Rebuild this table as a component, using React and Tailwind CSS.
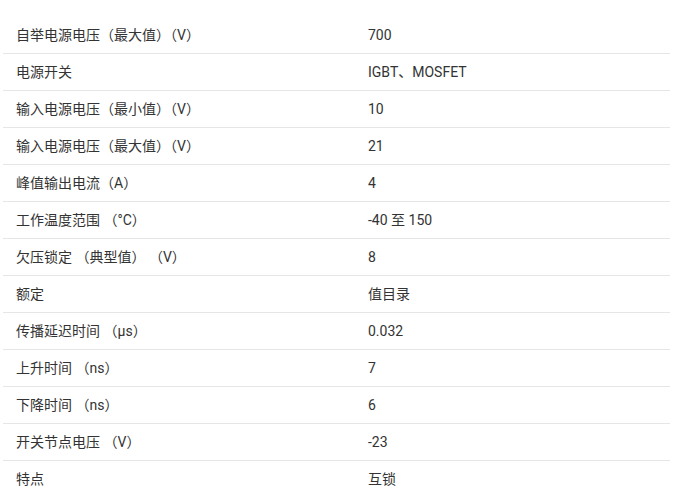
import React from "react";

const rows = [
  ["自举电源电压（最大值）（V）", "700"],
  ["电源开关", "IGBT、MOSFET"],
  ["输入电源电压（最小值）（V）", "10"],
  ["输入电源电压（最大值）（V）", "21"],
  ["峰值输出电流（A）", "4"],
  ["工作温度范围 （°C）", "-40 至 150"],
  ["欠压锁定 （典型值） （V）", "8"],
  ["额定", "值目录"],
  ["传播延迟时间 （µs）", "0.032"],
  ["上升时间 （ns）", "7"],
  ["下降时间 （ns）", "6"],
  ["开关节点电压 （V）", "-23"],
  ["特点", "互锁"],
];

export default function App() {
  return (
    <div
      className="w-[691px] h-[496px] overflow-hidden bg-white pt-[17px] pl-[3px] text-[14px] text-[#333333]"
      style={{ fontFamily: "Roboto, 'Noto Sans CJK SC', sans-serif" }}
    >
      <div className="w-[667px] flex flex-col">
        {rows.map(([k, v], i) => (
          <div
            key={i}
            className="h-[37px] flex items-center border-b border-[#e6e6e6]"
          >
            <div className="w-[365px] pl-[13px] shrink-0">{k}</div>
            <div>{v}</div>
          </div>
        ))}
      </div>
    </div>
  );
}
